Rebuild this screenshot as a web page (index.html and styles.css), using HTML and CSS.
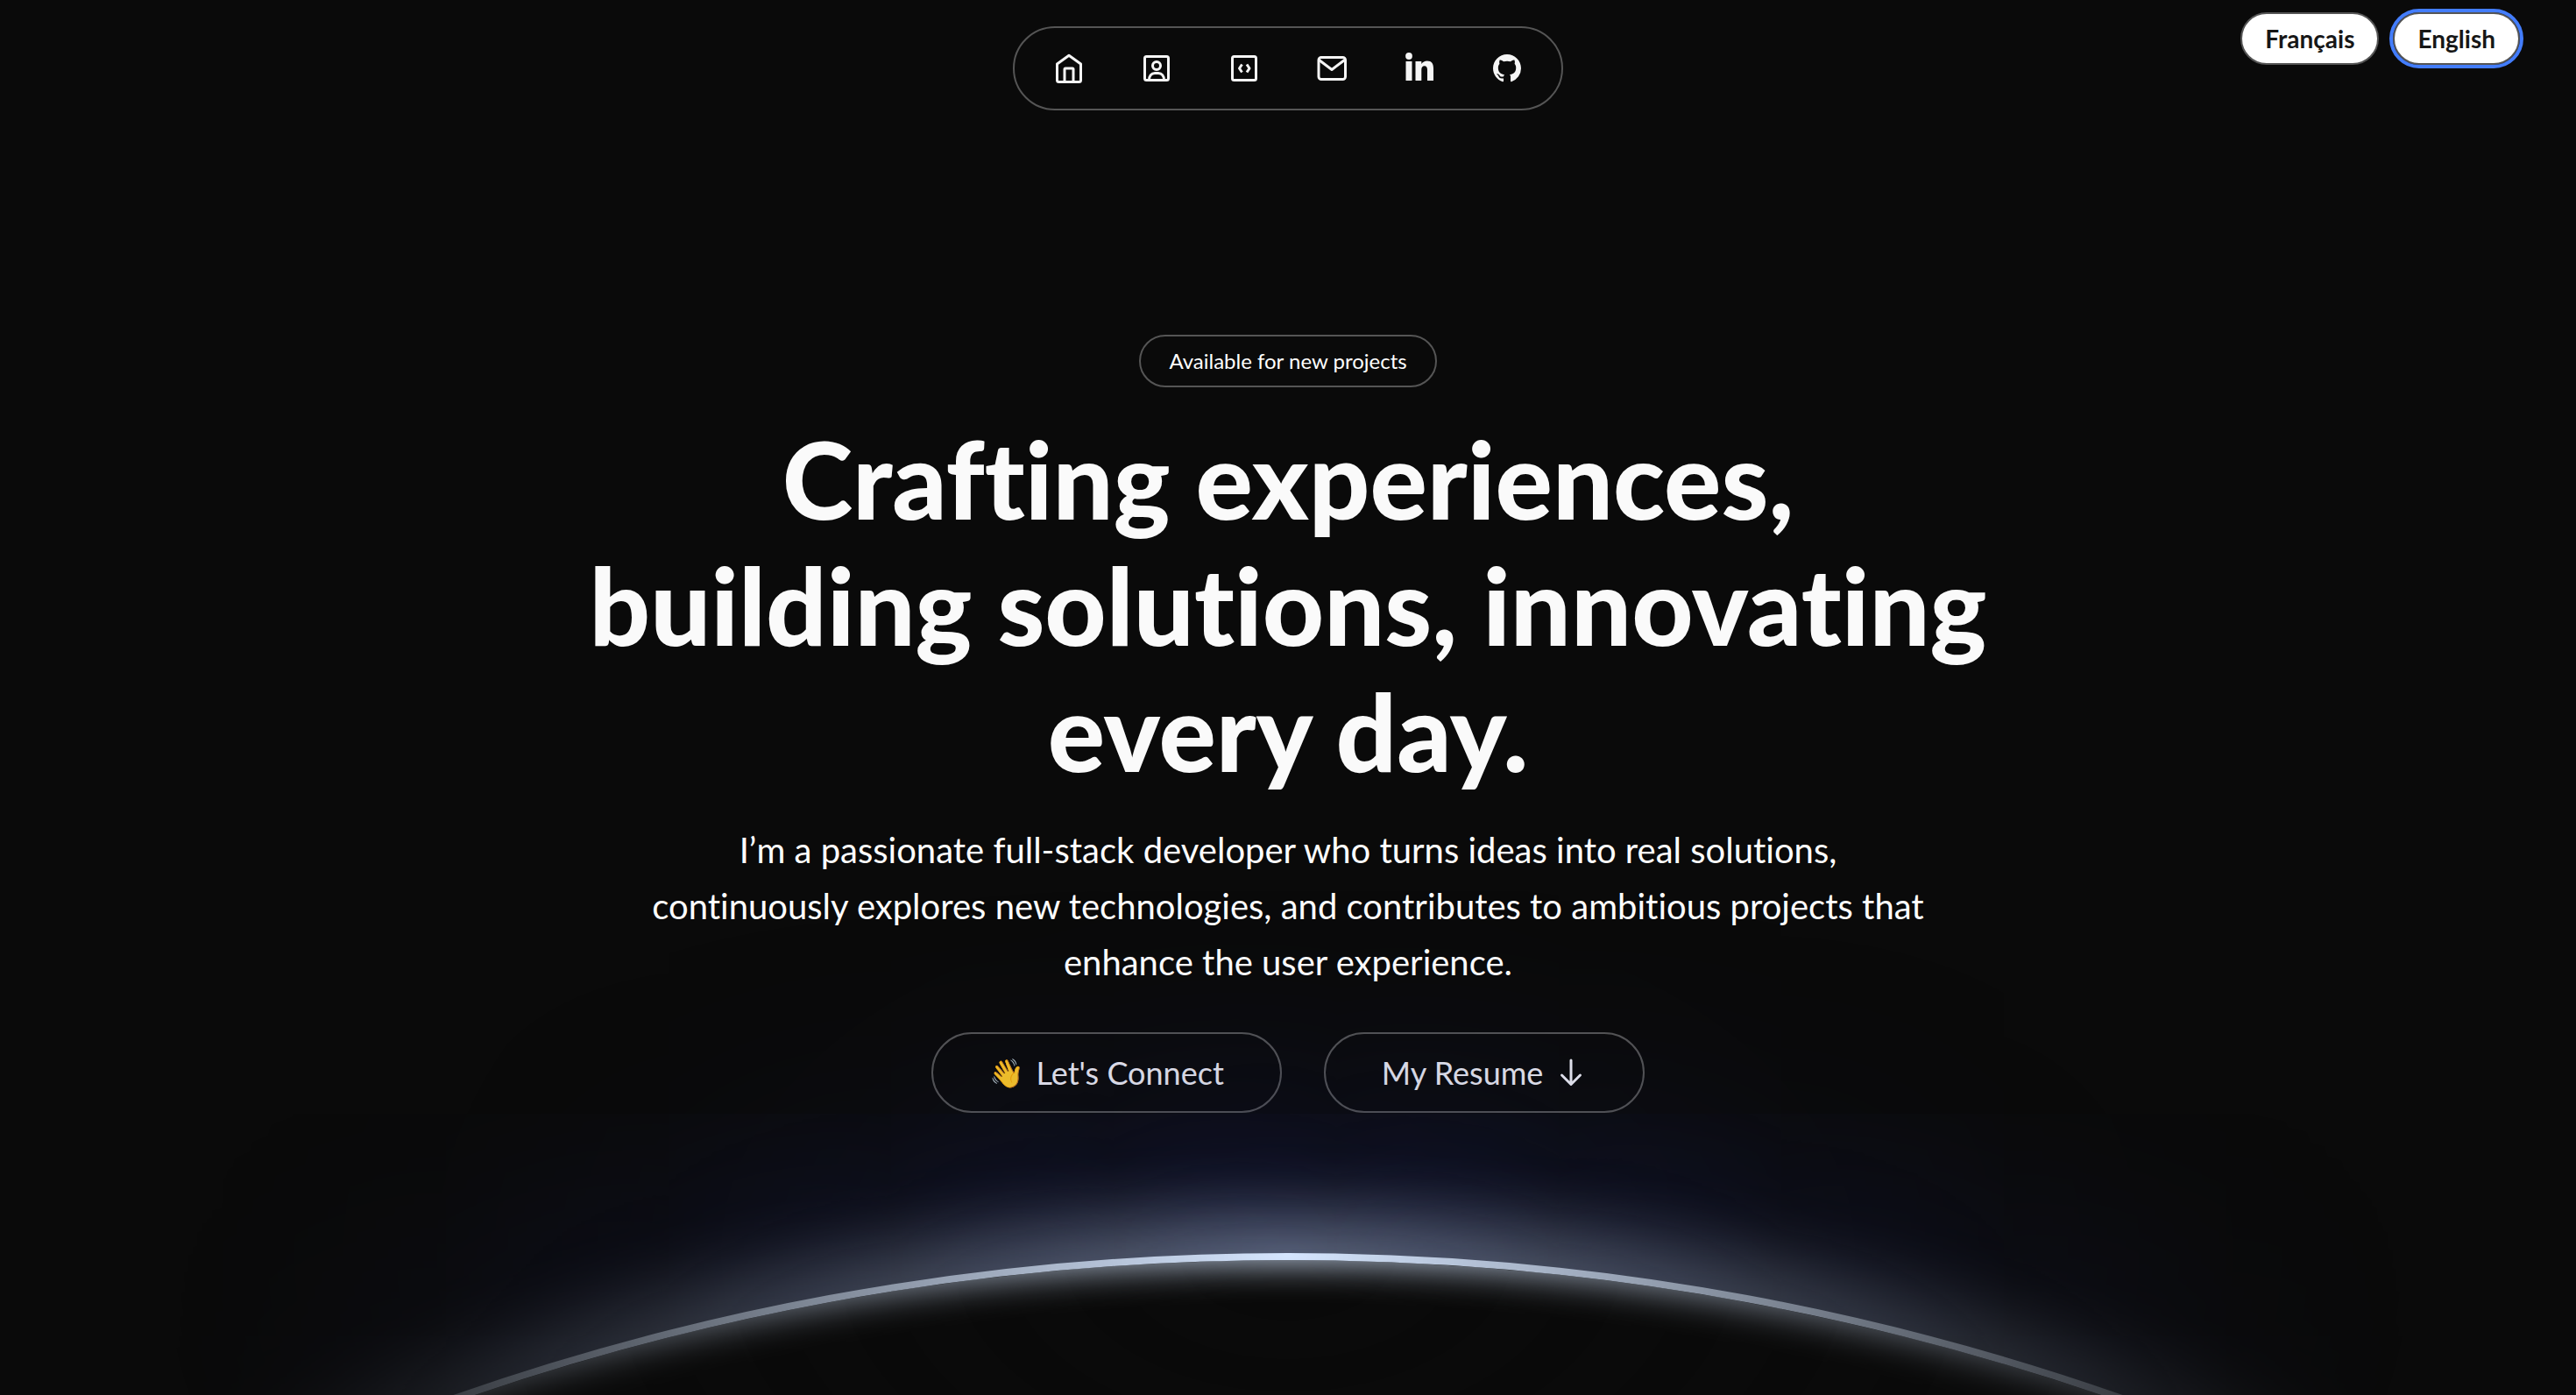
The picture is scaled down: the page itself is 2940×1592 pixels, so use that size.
FILE: index.html
```html
<!DOCTYPE html>
<html lang="en">
<head>
<meta charset="utf-8">
<meta name="viewport" content="width=device-width, initial-scale=1">
<title>Full-stack developer</title>
<link rel="stylesheet" href="styles.css">
</head>
<body>
<div class="page">
  <header class="topbar">
    <nav class="nav" aria-label="Main">
      <a href="#home" aria-label="Home"><svg viewBox="0 0 40 40" class="line"><path d="M20 5.2 33.500 15V33.500a2 2 0 0 1-2 2h-23a2 2 0 0 1-2-2V15z"/><path d="M15 35V21a1 1 0 0 1 1-1h8a1 1 0 0 1 1 1v14"/></svg></a>
      <a href="#about" aria-label="About"><svg viewBox="0 0 40 40" class="line"><rect x="6.500" y="6.500" width="27" height="27" rx="2"/><circle cx="20" cy="17" r="4.500"/><path d="M11.500 33.500c0-5 2.500-8 6.500-8h4c4 0 6.500 3 6.500 8"/></svg></a>
      <a href="#projects" aria-label="Projects"><svg viewBox="0 0 40 40" class="line"><rect x="6.500" y="6.500" width="27" height="27" rx="2"/><path d="m17.500 15.500-3 4.500 3 4.500M23 15.500l3 4.500-3 4.500"/></svg></a>
      <a href="#contact" aria-label="Contact"><svg viewBox="0 0 40 40" class="line"><rect x="5" y="7.500" width="30.500" height="25" rx="3"/><path d="m5.500 10.500 14.500 11 14.500-11"/></svg></a>
      <a href="#linkedin" aria-label="LinkedIn"><svg viewBox="0 0 40 40" class="solid"><circle cx="8" cy="6" r="3.900"/><path d="M4.500 12h7v22h-7zM15.500 12h6.800v3c1.400-2.300 3.800-3.500 6.500-3.500 5.200 0 7.200 3.400 7.200 8.700V34h-7V21.800c0-3-1.100-4.500-3.200-4.500-2.300 0-3.500 1.600-3.500 4.500V34h-6.800z"/></svg></a>
      <a href="#github" aria-label="GitHub"><svg viewBox="-2 -2 20 20" class="solid"><path d="M8 0C3.580 0 0 3.580 0 8c0 3.540 2.290 6.530 5.470 7.590.4.070.55-.17.55-.38 0-.19-.01-.82-.01-1.490-2.010.37-2.530-.49-2.690-.94-.09-.23-.48-.94-.82-1.130-.28-.15-.68-.52-.01-.53.63-.01 1.080.58 1.230.82.72 1.210 1.870.87 2.330.66.070-.52.28-.87.51-1.070-1.780-.2-3.640-.89-3.640-3.950 0-.87.31-1.590.82-2.150-.08-.2-.36-1.020.08-2.120 0 0 .67-.21 2.200.82.64-.18 1.320-.27 2-.27s1.360.09 2 .27c1.530-1.040 2.200-.82 2.200-.82.44 1.100.16 1.920.08 2.120.51.56.82 1.270.82 2.150 0 3.070-1.870 3.750-3.650 3.950.29.25.54.73.54 1.480 0 1.070-.01 1.930-.01 2.200 0 .21.15.46.55.38A8.010 8.010 0 0 0 16 8c0-4.420-3.580-8-8-8z"/></svg></a>
    </nav>
    <div class="langs">
      <button type="button" class="lang" lang="fr">Français</button>
      <button type="button" class="lang active" aria-pressed="true">English</button>
    </div>
  </header>
  <main class="hero">
    <p class="badge">Available for new projects</p>
    <h1>Crafting experiences,<br>building solutions, innovating<br>every day.</h1>
    <p class="lead">I’m a passionate full-stack developer who turns ideas into real solutions,<br>continuously explores new technologies, and contributes to ambitious projects that<br>enhance the user experience.</p>
    <div class="actions">
      <a class="button" href="#contact"><span class="emoji" aria-hidden="true">👋</span>Let's Connect</a>
      <a class="button" href="#resume">My Resume<svg viewBox="0 0 36 36" class="arrow"><path d="M18 4v27M7.500 21 18 31.500 28.500 21"/></svg></a>
    </div>
  </main>
  <div class="sky" aria-hidden="true"><div class="planet"></div></div>
</div>
</body>
</html>
```
FILE: styles.css
```css
* {
  box-sizing: border-box;
}

body {
  margin: 0;
  background: #0a0a0a;
  color: #fff;
  font-family: Lato, "Open Sans", sans-serif;
  font-variant-ligatures: none;
}

.page {
  position: relative;
  min-height: 100vh;
  overflow: hidden;
}

.topbar {
  display: grid;
  grid-template-columns: 1fr auto 1fr;
  align-items: start;
  padding: 0 64px;
}

.nav {
  grid-column: 2;
  display: flex;
  gap: 60px;
  margin-top: 30px;
  padding: 26px 42px;
  border: 2px solid #555;
  border-radius: 48px;
}

.nav a,
.nav svg {
  display: block;
  width: 40px;
  height: 40px;
}

.line {
  fill: none;
  stroke: #f5f5f5;
  stroke-width: 3;
  stroke-linejoin: round;
  stroke-linecap: butt;
}

.solid {
  fill: #f5f5f5;
}

.langs {
  display: flex;
  justify-content: flex-end;
  gap: 16px;
  margin-top: 14px;
}

.lang {
  height: 60px;
  padding: 0 26px;
  border: 2px solid #555;
  border-radius: 30px;
  background: #fff;
  color: #171717;
  font: inherit;
  font-size: 28px;
  font-weight: 700;
}

.lang.active {
  outline: 4px solid #437dfc;
}

.hero {
  display: flex;
  flex-direction: column;
  align-items: center;
  padding: 256px 64px 0;
  text-align: center;
}

.badge {
  margin: 0;
  padding: 0 32px;
  border: 2px solid #555;
  border-radius: 30px;
  font-size: 24px;
  line-height: 56px;
}

h1 {
  margin: 32px 0 0;
  color: #fafafa;
  font-size: 122px;
  font-weight: 900;
  line-height: 144px;
}

.lead {
  margin: 32px 0 0;
  font-size: 40px;
  line-height: 64px;
}

.actions {
  display: flex;
  gap: 48px;
  margin-top: 48px;
}

.button {
  display: flex;
  align-items: center;
  gap: 14px;
  height: 92px;
  padding: 0 64px;
  border: 2px solid #555;
  border-radius: 46px;
  color: #ececf4;
  font-size: 36px;
  text-decoration: none;
}

.emoji {
  font-size: 32px;
}

.arrow {
  width: 36px;
  height: 36px;
  fill: none;
  stroke: currentColor;
  stroke-width: 3;
  stroke-linecap: round;
  stroke-linejoin: round;
}

/* Horizon glow: fades out towards both sides and upwards */
.sky {
  position: absolute;
  inset: 0;
  overflow: hidden;
  pointer-events: none;
  mask-image: radial-gradient(ellipse 44vw 800px at 50% calc(100% - 162px), #000, transparent);
}

.planet {
  position: absolute;
  top: calc(100% - 162px);
  left: -48vw;
  width: 196vw;
  aspect-ratio: 1;
  border: 8px solid #d6e6ff;
  border-radius: 50%;
  background: #0a0a0a;
  box-shadow:
    inset 0 0 44px #d6e6ff,
    0 -42px 76px rgba(210, 230, 255, 0.4),
    0 -160px 260px rgba(26, 32, 92, 0.55);
}
```
